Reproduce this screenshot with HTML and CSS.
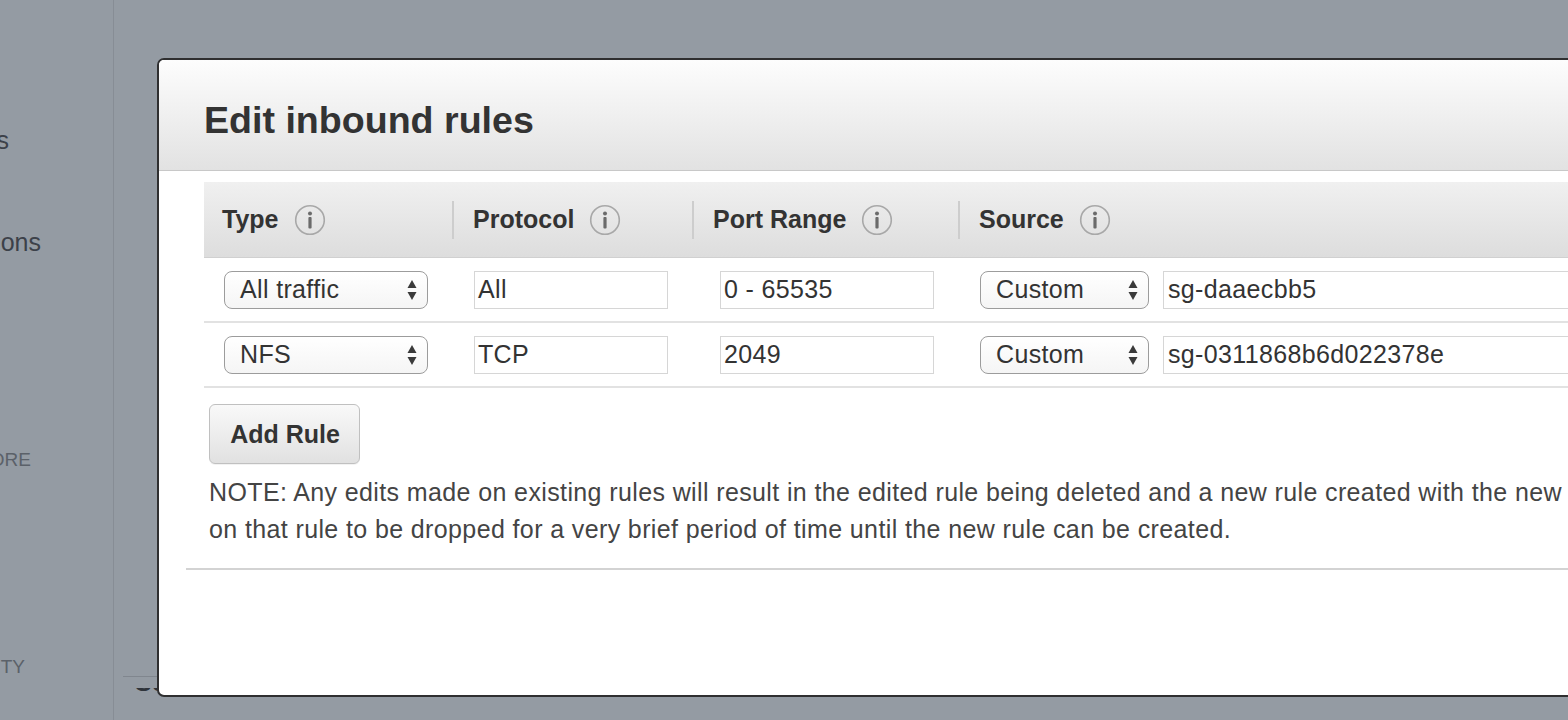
FILE: index.html
```html
<!DOCTYPE html>
<html lang="en">
<head>
<meta charset="utf-8">
<title>Edit inbound rules</title>
<link rel="stylesheet" href="styles.css">
</head>
<body>
<div class="app">
  <nav class="sidebar">
    <div class="nav-item nav-a">Dedicated Hosts</div>
    <div class="nav-item nav-b">Capacity Reservations</div>
    <div class="nav-section nav-c">ELASTIC BLOCK STORE</div>
    <div class="nav-section nav-d">NETWORK &amp; SECURITY</div>
  </nav>
  <main class="main">
    <div class="main-foot">
      <div class="main-rule"></div>
      <div class="main-clip"><div class="main-title">Security Group Rules</div></div>
    </div>
  </main>
</div>

<div class="modal">
  <div class="modal-header">
    <h1 class="modal-title">Edit inbound rules</h1>
  </div>
  <div class="modal-body">
    <div class="rules">
      <div class="rules-head">
        <div class="th th-type">Type <svg class="info" viewBox="0 0 32 32"><circle cx="16" cy="16" r="14.3"/><circle class="dot" cx="16" cy="9.5" r="2"/><rect class="dot" x="14.4" y="13" width="3.2" height="11.5" rx="1"/></svg></div>
        <div class="th">Protocol <svg class="info" viewBox="0 0 32 32"><circle cx="16" cy="16" r="14.3"/><circle class="dot" cx="16" cy="9.5" r="2"/><rect class="dot" x="14.4" y="13" width="3.2" height="11.5" rx="1"/></svg></div>
        <div class="th">Port Range <svg class="info" viewBox="0 0 32 32"><circle cx="16" cy="16" r="14.3"/><circle class="dot" cx="16" cy="9.5" r="2"/><rect class="dot" x="14.4" y="13" width="3.2" height="11.5" rx="1"/></svg></div>
        <div class="th">Source <svg class="info" viewBox="0 0 32 32"><circle cx="16" cy="16" r="14.3"/><circle class="dot" cx="16" cy="9.5" r="2"/><rect class="dot" x="14.4" y="13" width="3.2" height="11.5" rx="1"/></svg></div>
      </div>

      <div class="rule-row">
        <div class="cell c-type">
          <div class="select sel-type"><span>All traffic</span><svg class="arrows" viewBox="0 0 10 20"><path d="M5 0 L9.5 8 H0.5 Z"/><path d="M5 20 L9.5 12 H0.5 Z"/></svg></div>
        </div>
        <div class="cell c-proto"><div class="input in-proto">All</div></div>
        <div class="cell c-port"><div class="input in-port">0 - 65535</div></div>
        <div class="cell c-src">
          <div class="select sel-src"><span>Custom</span><svg class="arrows" viewBox="0 0 10 20"><path d="M5 0 L9.5 8 H0.5 Z"/><path d="M5 20 L9.5 12 H0.5 Z"/></svg></div>
          <div class="input in-src">sg-daaecbb5</div>
        </div>
      </div>

      <div class="rule-row">
        <div class="cell c-type">
          <div class="select sel-type"><span>NFS</span><svg class="arrows" viewBox="0 0 10 20"><path d="M5 0 L9.5 8 H0.5 Z"/><path d="M5 20 L9.5 12 H0.5 Z"/></svg></div>
        </div>
        <div class="cell c-proto"><div class="input in-proto">TCP</div></div>
        <div class="cell c-port"><div class="input in-port">2049</div></div>
        <div class="cell c-src">
          <div class="select sel-src"><span>Custom</span><svg class="arrows" viewBox="0 0 10 20"><path d="M5 0 L9.5 8 H0.5 Z"/><path d="M5 20 L9.5 12 H0.5 Z"/></svg></div>
          <div class="input in-src">sg-0311868b6d022378e</div>
        </div>
      </div>
    </div>

    <button class="add-btn" type="button">Add Rule</button>

    <p class="note">NOTE: Any edits made on existing rules will result in the edited rule being deleted and a new rule created with the new details. This will cause traffic that depends<br>on that rule to be dropped for a very brief period of time until the new rule can be created.</p>
  </div>
  <div class="modal-divider"></div>
</div>
</body>
</html>
```

FILE: styles.css
```css
* { box-sizing: border-box; }

html, body {
  margin: 0;
  padding: 0;
  width: 1568px;
  height: 720px;
  overflow: hidden;
  background: #949ba3;
  font-family: "Liberation Sans", Arial, sans-serif;
}

.app {
  display: flex;
  height: 720px;
}

/* ---------- sidebar ---------- */
.sidebar {
  width: 114px;
  flex: none;
  border-right: 1px solid #878d95;
  overflow: hidden;
  display: flex;
  flex-direction: column;
  padding-top: 125px;
}

.nav-item, .nav-section {
  display: flex;
  justify-content: flex-end;
  white-space: nowrap;
}

.nav-item {
  font-size: 25px;
  line-height: 30px;
  height: 30px;
  color: #3c4149;
}

.nav-section {
  font-size: 19px;
  line-height: 24px;
  height: 24px;
  color: #5b6169;
}

.nav-a { width: 9px; }
.nav-b { width: 41px; margin-top: 72px; }
.nav-c { width: 31px; margin-top: 191px; }
.nav-d { width: 25px; margin-top: 183px; }

/* ---------- main background ---------- */
.main {
  flex: 1;
  display: flex;
  flex-direction: column;
  padding-left: 9px;
}

.main-foot {
  margin-top: 676px;
}

.main-rule {
  height: 1px;
  background: #80868e;
}

.main-clip {
  height: 12px;
  margin-top: 11px;
  overflow: hidden;
}

.main-title {
  margin-top: -21px;
  padding-left: 12px;
  font-size: 25px;
  line-height: 30px;
  font-weight: bold;
  color: #2f343b;
  white-space: nowrap;
}

/* ---------- modal ---------- */
.modal {
  position: absolute;
  left: 157px;
  top: 58px;
  width: 1700px;
  height: 639px;
  background: #fff;
  border: 2px solid #2f2f30;
  border-radius: 7px;
  overflow: hidden;
}

.modal-header {
  height: 111px;
  padding: 10px 0 0 45px;
  display: flex;
  align-items: center;
  background: linear-gradient(#fdfdfd, #e2e2e2);
  border-bottom: 1px solid #c8c8c8;
}

.modal-title {
  margin: 0;
  font-size: 37.6px;
  font-weight: bold;
  color: #333;
}

.modal-body {
  padding: 11px 0 0 45px;
}

/* rules table */
.rules-head, .rule-row {
  display: grid;
  grid-template-columns: 248px 240px 266px 1fr;
  align-items: center;
}

.rules-head {
  height: 76px;
  background: linear-gradient(#f0f0f0, #dddddd);
  border-bottom: 1px solid #d0d0d0;
}

.th {
  height: 38px;
  display: flex;
  align-items: center;
  gap: 15px;
  padding-left: 19px;
  font-size: 25px;
  font-weight: bold;
  color: #333;
  border-left: 2px solid #cdcdcd;
}

.th-type {
  border-left: none;
  padding-left: 18px;
}

.info {
  width: 32px;
  height: 32px;
  flex: none;
}

.info circle {
  fill: none;
  stroke: #a8a8a8;
  stroke-width: 1.6;
}

.info .dot {
  fill: #6b6b6b;
  stroke: none;
}

.rule-row {
  height: 65px;
  border-bottom: 2px solid #e2e2e2;
}

.cell {
  display: flex;
  align-items: center;
}

.c-type { padding-left: 20px; }
.c-proto { padding-left: 22px; }
.c-port { padding-left: 28px; }
.c-src { padding-left: 22px; gap: 14px; }

.select, .input {
  height: 38px;
  font-size: 25px;
  letter-spacing: 0.35px;
  color: #333;
  white-space: nowrap;
  display: flex;
  align-items: center;
}

.select {
  justify-content: space-between;
  padding: 0 10px 0 15px;
  border: 1px solid #9c9c9c;
  border-radius: 8px;
  background: linear-gradient(#ffffff, #f5f5f5);
}

.sel-type { width: 204px; }
.sel-src { width: 169px; }

.arrows {
  width: 10px;
  height: 20px;
  fill: #3a3a3a;
}

.input {
  padding-left: 3px;
  border: 1px solid #d6d6d6;
  background: #fff;
}

.in-proto { width: 194px; }
.in-port { width: 214px; }
.in-src { width: 600px; padding-left: 4px; }

/* add button */
.add-btn {
  display: block;
  margin: 16px 0 0 5px;
  width: 151px;
  height: 60px;
  padding: 0 0 0 1px;
  border: 1px solid #c0c0c0;
  border-radius: 6px;
  background: linear-gradient(#f9f9f9, #e1e1e1);
  box-shadow: 0 1px 0 rgba(0,0,0,0.05);
  font-family: "Liberation Sans", Arial, sans-serif;
  font-size: 25px;
  font-weight: bold;
  color: #333;
}

.note {
  margin: 10px 0 0 5px;
  font-size: 25px;
  letter-spacing: 0.38px;
  line-height: 37px;
  color: #444;
  white-space: nowrap;
}

.modal-divider {
  margin: 20px 0 0 27px;
  height: 2px;
  background: #d3d3d3;
}
```
